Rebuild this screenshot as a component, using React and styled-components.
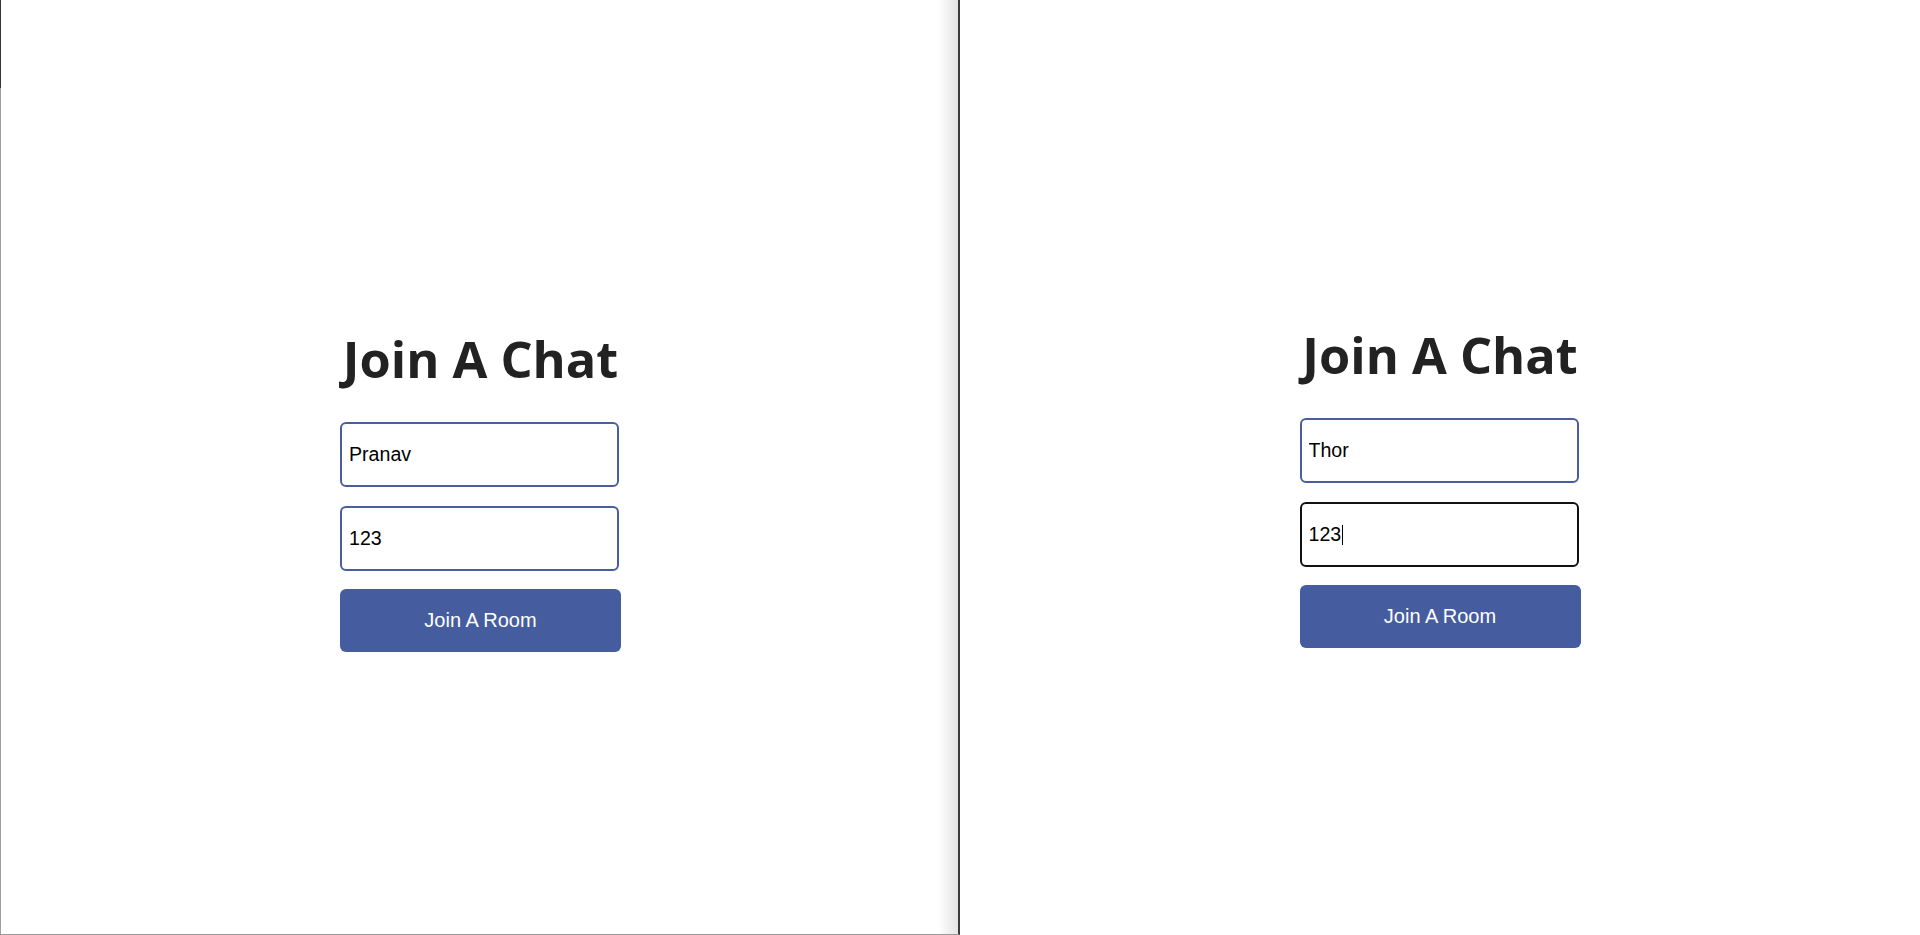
import React from "react";
import styled, { createGlobalStyle } from "styled-components";

const GlobalStyle = createGlobalStyle`
  html, body {
    margin: 0;
    padding: 0;
    background: #ffffff;
    overflow: hidden;
  }
`;

const Screen = styled.div`
  width: 1920px;
  height: 935px;
  display: flex;
  background: #fff;
`;

const Window = styled.div`
  box-sizing: border-box;
  height: 935px;
  width: 960px;
  padding-top: ${(p) => p.top}px;
  padding-left: ${(p) => (p.framed ? "3px" : "0")};
  display: flex;
  flex-direction: column;
  align-items: center;
  border-right: ${(p) => (p.framed ? "2px solid #3c3c3c" : "none")};
  border-bottom: ${(p) => (p.framed ? "1px solid #9a9a9a" : "none")};
  background: ${(p) =>
    p.framed
      ? `linear-gradient(to bottom, #353535 0 88px, #a0a0a0 88px) left top / 1px 100% no-repeat,
         linear-gradient(to right, rgba(255,255,255,0), #e4e4e4) right top / 20px 100% no-repeat,
         #ffffff`
      : "#ffffff"};
`;

const Title = styled.h1`
  margin: -1px 0 28px;
  padding-top: 1px;
  font-family: "Open Sans", "Noto Sans", sans-serif;
  font-weight: 700;
  font-size: 50.5px;
  line-height: 71px;
  color: #222222;
`;

const Form = styled.div`
  width: 281px;
  display: flex;
  flex-direction: column;
  align-items: flex-start;
  gap: 19px;
`;

const FieldWrap = styled.div`
  position: relative;
  width: 279px;
  height: 65px;
`;

const Field = styled.input`
  box-sizing: border-box;
  width: 279px;
  height: 65px;
  padding: 0 0 0 7px;
  border: 2px solid ${(p) => (p.active ? "#111111" : "#4a5e9e")};
  border-radius: 6px;
  font-family: "Liberation Sans", Arial, sans-serif;
  font-size: 19.6px;
  color: #000;
  background: #fff;
  outline: none;
  caret-color: transparent;
`;

const Caret = styled.span`
  position: absolute;
  left: ${(p) => p.left}px;
  top: 23px;
  width: 1px;
  height: 20px;
  background: #000;
  pointer-events: none;
`;

const JoinButton = styled.button`
  width: 281px;
  height: 63px;
  margin-top: -1px;
  border: none;
  border-radius: 6px;
  background: #455d9f;
  color: #ffffff;
  font-family: "Liberation Sans", Arial, sans-serif;
  font-size: 20px;
  cursor: pointer;
`;

// Arial digit advance is 0.556em
const caretOffset = (text) => 9 + text.length * 0.556 * 19.6;

const JoinCard = ({ name, room, focusRoom, top, framed }) => (
  <Window top={top} framed={framed}>
    <Title>Join A Chat</Title>
    <Form>
      <FieldWrap>
        <Field defaultValue={name} placeholder="Name..." />
      </FieldWrap>
      <FieldWrap>
        <Field defaultValue={room} placeholder="Room ID..." active={focusRoom} />
        {focusRoom && <Caret left={Math.round(caretOffset(room))} />}
      </FieldWrap>
      <JoinButton>Join A Room</JoinButton>
    </Form>
  </Window>
);

const App = () => (
  <>
    <GlobalStyle />
    <Screen>
      <JoinCard name="Pranav" room="123" top={323} framed />
      <JoinCard name="Thor" room="123" top={319} focusRoom />
    </Screen>
  </>
);

export default App;
